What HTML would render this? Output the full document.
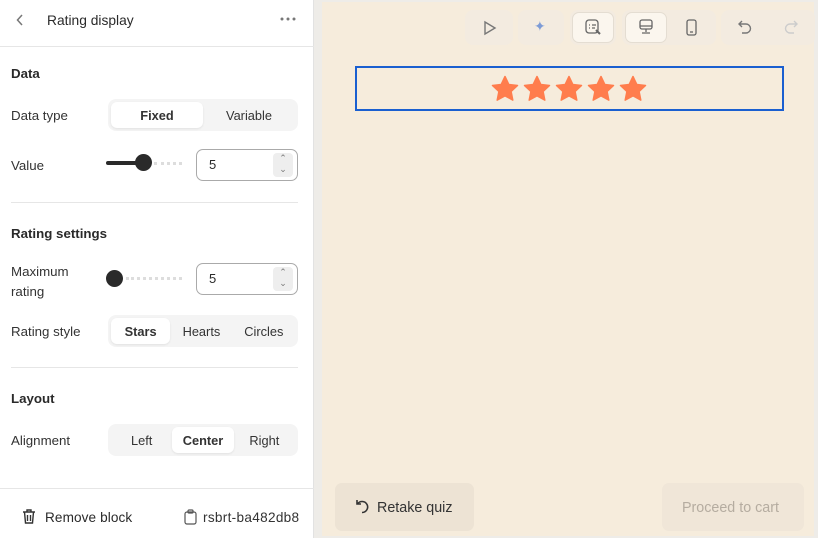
<!DOCTYPE html>
<html><head><style>
*{box-sizing:border-box;margin:0;padding:0}
body{width:818px;height:538px;overflow:hidden;font-family:"Liberation Sans",sans-serif;color:#2a2a2a;background:#eeece8;position:relative;font-size:13px}
.panel{position:absolute;left:0;top:0;width:314px;height:538px;background:#fff;border-right:1px solid #e2e2e2}
.abs{position:absolute}
.lbl{position:absolute;left:11px;font-size:13.3px;color:#333}
.h{position:absolute;left:11px;font-size:13.3px;font-weight:bold;color:#2a2a2a}
.seg{position:absolute;background:#f4f4f4;border-radius:8px;display:flex;padding:3px}
.seg div{flex:1;text-align:center;font-size:12.8px;line-height:27px;color:#333;border-radius:6px}
.seg .on{background:#fff;font-weight:bold;box-shadow:0 1px 2px rgba(0,0,0,.08)}
.num{position:absolute;left:196px;width:102px;height:32px;border:1px solid #aaa;border-radius:7px;padding-left:12px;line-height:30px;font-size:13px}
.num .sp{position:absolute;right:4px;top:3px;width:20px;height:24px;background:#eee;border-radius:4px;color:#777;font-size:9px;text-align:center;line-height:11px}
.hr{position:absolute;left:11px;width:287px;height:1px;background:#e6e6e6}
.canvas{position:absolute;left:322px;top:2px;width:492px;height:534px;background:#f6ecdc}
.tb{position:absolute;top:10px;height:35px;background:#f3ebe0;border-radius:8px}
.btn{position:absolute;border-radius:7px}
</style></head><body>
<div class="panel">
 <svg class="abs" style="left:16px;top:14px" width="8" height="12" viewBox="0 0 8 12" fill="none" stroke="#777" stroke-width="1.5"><path d="M6 1L1.5 6 6 11"/></svg>
 <div class="abs" style="left:47px;top:13px;font-size:13.8px">Rating display</div>
 <svg class="abs" style="left:280px;top:17px" width="16" height="4" viewBox="0 0 16 4" fill="#777"><circle cx="2" cy="2" r="1.5"/><circle cx="8" cy="2" r="1.5"/><circle cx="14" cy="2" r="1.5"/></svg>
 <div class="abs" style="left:0;top:46px;width:314px;height:1px;background:#e6e6e6"></div>
 <div class="h" style="top:66px">Data</div>
 <div class="lbl" style="top:108px">Data type</div>
 <div class="seg" style="left:108px;top:99px;width:190px;height:32px"><div class="on">Fixed</div><div>Variable</div></div>
 <div class="lbl" style="top:158px">Value</div>
 <div class="abs" style="left:106px;top:161px;width:38px;height:4px;background:#2a2a2a;border-radius:2px"></div>
 <div class="abs" style="left:135px;top:154px;width:17px;height:17px;background:#2a2a2a;border-radius:50%"></div>
 <div class="abs" style="left:154px;top:162px;width:28px;height:2px;border-top:3px dotted #ddd"></div>
 <div class="num" style="top:149px">5<div class="sp">⌃<br>⌄</div></div>
 <div class="hr" style="top:202px"></div>
 <div class="h" style="top:226px">Rating settings</div>
 <div class="lbl" style="top:262px;line-height:20px">Maximum<br>rating</div>
 <div class="abs" style="left:106px;top:270px;width:17px;height:17px;background:#2a2a2a;border-radius:50%"></div>
 <div class="abs" style="left:126px;top:277px;width:56px;height:2px;border-top:3px dotted #ddd"></div>
 <div class="num" style="top:263px">5<div class="sp">⌃<br>⌄</div></div>
 <div class="lbl" style="top:324px">Rating style</div>
 <div class="seg" style="left:108px;top:315px;width:190px;height:32px"><div class="on" style="flex:.95">Stars</div><div>Hearts</div><div>Circles</div></div>
 <div class="hr" style="top:367px"></div>
 <div class="h" style="top:391px">Layout</div>
 <div class="lbl" style="top:433px">Alignment</div>
 <div class="seg" style="left:108px;top:424px;width:190px;height:32px"><div>Left</div><div class="on">Center</div><div>Right</div></div>
 <div class="abs" style="left:0;top:488px;width:314px;height:1px;background:#e6e6e6"></div>
 <svg class="abs" style="left:22px;top:509px" width="14" height="15" viewBox="0 0 14 15" fill="none" stroke="#333" stroke-width="1.4"><path d="M1 3h12M5 3V1h4v2M2.5 3l1 11h7l1-11M5.5 6v6M8.5 6v6"/></svg>
 <div class="abs" style="left:45px;top:510px;font-size:13.6px;letter-spacing:.1px">Remove block</div>
 <svg class="abs" style="left:184px;top:509px" width="13" height="16" viewBox="0 0 13 16" fill="none" stroke="#555" stroke-width="1.2"><rect x="1" y="3" width="11" height="12" rx="2"/><rect x="4" y="1" width="5" height="3" rx="1"/></svg>
 <div class="abs" style="left:203px;top:510px;font-size:13.6px;letter-spacing:.3px;color:#333">rsbrt-ba482db8</div>
</div>
<div class="canvas"></div>
<div class="tb" style="left:465px;width:48px"></div>
<div class="tb" style="left:518px;width:46px"></div>
<div class="tb" style="left:570px;width:46px"></div>
<div class="btn" style="left:572px;top:12px;width:42px;height:31px;background:#fbf6ee;border:1px solid #e4ddd2"></div>
<div class="tb" style="left:622px;width:94px"></div>
<div class="btn" style="left:625px;top:12px;width:42px;height:31px;background:#fbf6ee;border:1px solid #e4ddd2"></div>
<div class="tb" style="left:721px;width:94px"></div>
<svg class="abs" style="left:483px;top:20px" width="14" height="16" viewBox="0 0 14 16" fill="none" stroke="#777" stroke-width="1.4"><path d="M2 2l10 6-10 6z"/></svg>
<div class="abs" style="left:534px;top:18px;color:#7d9bd6;font-size:14px">✦</div>
<svg class="abs" style="left:585px;top:19px" width="16" height="17" viewBox="0 0 16 17" fill="none" stroke="#666" stroke-width="1.3"><rect x="1" y="1" width="12" height="13" rx="3"/><path d="M4 6h1M7 6h4M4 9h1M7 9h3"/><path d="M11 11l4 4" stroke-width="2"/></svg>
<svg class="abs" style="left:638px;top:19px" width="16" height="16" viewBox="0 0 16 16" fill="none" stroke="#666" stroke-width="1.3"><rect x="2" y="1" width="12" height="9" rx="2"/><path d="M2 7h12M8 10v3M4 14h8"/></svg>
<svg class="abs" style="left:686px;top:19px" width="11" height="17" viewBox="0 0 11 17" fill="none" stroke="#666" stroke-width="1.3"><rect x="1" y="1" width="9" height="15" rx="2"/><path d="M4 13h3"/></svg>
<svg class="abs" style="left:738px;top:20px" width="14" height="14" viewBox="0 0 14 14" fill="none" stroke="#777" stroke-width="1.4"><path d="M4 1L1 4l3 3M1 4h7a4.5 4.5 0 010 9H4"/></svg>
<svg class="abs" style="left:784px;top:20px" width="14" height="14" viewBox="0 0 14 14" fill="none" stroke="#ccc" stroke-width="1.4"><path d="M10 1l3 3-3 3M13 4H6a4.5 4.5 0 000 9h4"/></svg>
<div class="abs" style="left:355px;top:66px;width:429px;height:45px;border:2px solid #1a5fd0"></div>
<svg class="abs" style="left:490px;top:75px" width="160" height="30" viewBox="0 0 160 30">
<defs><path id="s" d="M14 1.5l3.8 8 8.7 1-6.4 6 1.7 8.6L14 20.8l-7.8 4.3 1.7-8.6-6.4-6 8.7-1z" fill="#ff7d4d" stroke="#ff7d4d" stroke-width="1.5" stroke-linejoin="round"/></defs>
<use href="#s" x="1"/><use href="#s" x="33"/><use href="#s" x="65"/><use href="#s" x="97"/><use href="#s" x="129"/></svg>
<div class="btn" style="left:335px;top:483px;width:139px;height:48px;background:#ede3d4"></div>
<svg class="abs" style="left:355px;top:499px" width="14" height="15" viewBox="0 0 14 15" fill="none" stroke="#333" stroke-width="1.6"><path d="M2 1v4h4M2.5 5A5.5 5.5 0 117 13.5"/></svg>
<div class="abs" style="left:377px;top:500px;font-size:14.3px;color:#333">Retake quiz</div>
<div class="btn" style="left:662px;top:483px;width:142px;height:48px;background:#f0e6d8"></div>
<div class="abs" style="left:682px;top:500px;font-size:14.3px;color:#b5aca0">Proceed to cart</div>
</body></html>
